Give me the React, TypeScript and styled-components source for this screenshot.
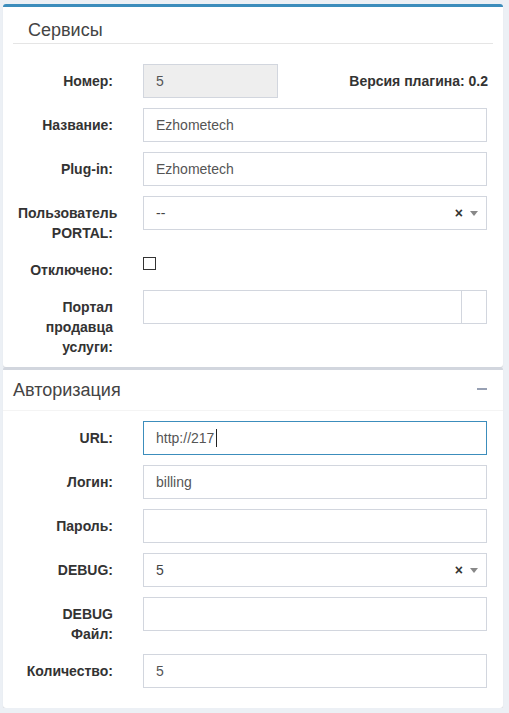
import React from "react";
import styled, { createGlobalStyle } from "styled-components";

const Global = createGlobalStyle`
  html, body { margin: 0; padding: 0; background: #ecf0f5; }
  body {
    font-family: "Liberation Sans", Arial, Helvetica, sans-serif;
    font-size: 14px;
    color: #333;
  }
  * { box-sizing: border-box; }
`;

const Page = styled.div`
  width: 509px;
  padding: 4px 6px 0 3px;
`;

const Box = styled.section<{ $accent: string }>`
  display: flow-root;
  background: #fff;
  border-top: 3px solid ${(p) => p.$accent};
  border-radius: 3px;
  box-shadow: 0 1px 1px rgba(0, 0, 0, 0.1);
  width: 500px;
`;

const Body = styled.div<{ $bottom: number }>`
  display: flow-root;
  padding: 10px 10px ${(p) => p.$bottom}px 10px;
`;

const Legend = styled.div`
  padding-left: 15px;
  font-size: 18px;
  line-height: 26px;
  color: #444;
  border-bottom: 1px solid #e5e5e5;
  margin-bottom: 20px;
`;

const BoxHeader = styled.div`
  display: flex;
  align-items: center;
  justify-content: space-between;
  padding: 10px;
  border-bottom: 1px solid #f4f4f4;
`;

const BoxTitle = styled.h3`
  margin: 0;
  font-size: 18px;
  line-height: 20px;
  font-weight: normal;
  color: #444;
`;

const Tool = styled.button`
  border: none;
  background: transparent;
  padding: 0 6px 0 0;
  margin: 0 0 3px;
  display: flex;
  cursor: pointer;
`;

const Row = styled.div`
  display: grid;
  grid-template-columns: 95px 1fr;
  column-gap: 30px;
  padding: 0 6px 0 5px;
  margin-bottom: 10px;
`;

const Label = styled.label`
  display: block;
  text-align: right;
  font-weight: bold;
  padding-top: 7px;
  line-height: 20px;
  color: #333;
  white-space: nowrap;
`;

const Input = styled.input<{ $focus?: boolean }>`
  display: block;
  width: 100%;
  height: 34px;
  padding: 6px 12px;
  border: 1px solid ${(p) => (p.$focus ? "#3c8dbc" : "#d2d6de")};
  border-radius: 0;
  font-family: inherit;
  font-size: 14px;
  line-height: 20px;
  color: #555;
  background: #fff;
  outline: none;
  &:disabled {
    background: #eee;
    color: #555;
    -webkit-text-fill-color: #555;
    opacity: 1;
  }
`;

const ShortInput = styled(Input)`
  width: 135px;
`;

const SplitCell = styled.div`
  display: flex;
  justify-content: space-between;
  align-items: flex-start;
`;

const Version = styled.div`
  font-weight: bold;
  padding-top: 7px;
  line-height: 20px;
  color: #333;
  margin-right: -1px;
`;

const FieldWrap = styled.div`
  position: relative;
`;

const Caret = styled.span`
  position: absolute;
  left: 73px;
  top: 8px;
  width: 1px;
  height: 18px;
  background: #222;
`;

const Select = styled.div`
  display: flex;
  align-items: center;
  height: 34px;
  padding: 6px 8px 6px 12px;
  border: 1px solid #d2d6de;
  background: #fff;
  color: #444;
  line-height: 20px;
`;

const SelectValue = styled.span`
  flex: 1;
`;

const Clear = styled.span`
  font-weight: bold;
  font-size: 14px;
  color: #333;
  margin-right: 7px;
  line-height: 20px;
`;

const Arrow = styled.span`
  width: 0;
  height: 0;
  border-top: 5px solid #888;
  border-left: 4px solid transparent;
  border-right: 4px solid transparent;
`;

const Check = styled.input`
  appearance: none;
  -webkit-appearance: none;
  display: block;
  width: 13px;
  height: 13px;
  margin: 4px 0 0;
  border: 1px solid #333;
  border-radius: 0;
  background: #fff;
`;

const Group = styled.div`
  display: flex;
  height: 34px;
`;

const GroupInput = styled(Input)`
  flex: 1;
`;

const Addon = styled.span`
  width: 25px;
  border: 1px solid #d2d6de;
  border-left: none;
  background: #fff;
`;

export default function App() {
  return (
    <>
      <Global />
      <Page>
        <Box $accent="#3c8dbc">
          <Body $bottom={0}>
            <Legend>Сервисы</Legend>
            <Row>
              <Label>Номер:</Label>
              <SplitCell>
                <ShortInput disabled value="5" readOnly />
                <Version>Версия плагина: 0.2</Version>
              </SplitCell>
            </Row>
            <Row>
              <Label>Название:</Label>
              <Input value="Ezhometech" readOnly />
            </Row>
            <Row>
              <Label>Plug-in:</Label>
              <Input value="Ezhometech" readOnly />
            </Row>
            <Row>
              <Label>
                Пользователь
                <br />
                PORTAL:
              </Label>
              <Select>
                <SelectValue>--</SelectValue>
                <Clear>×</Clear>
                <Arrow />
              </Select>
            </Row>
            <Row>
              <Label>Отключено:</Label>
              <div>
                <Check type="checkbox" />
              </div>
            </Row>
            <Row>
              <Label>
                Портал
                <br />
                продавца
                <br />
                услуги:
              </Label>
              <Group>
                <GroupInput value="" readOnly />
                <Addon />
              </Group>
            </Row>
          </Body>
        </Box>
        <Box $accent="#d2d6de">
          <BoxHeader>
            <BoxTitle>Авторизация</BoxTitle>
            <Tool aria-label="collapse">
              <svg width="10" height="2" viewBox="0 0 10 2">
                <rect width="10" height="2" fill="#97a0b3" />
              </svg>
            </Tool>
          </BoxHeader>
          <Body $bottom={10}>
            <Row>
              <Label>URL:</Label>
              <FieldWrap>
                <Input $focus value="http://217" readOnly />
                <Caret />
              </FieldWrap>
            </Row>
            <Row>
              <Label>Логин:</Label>
              <Input value="billing" readOnly />
            </Row>
            <Row>
              <Label>Пароль:</Label>
              <Input type="password" value="" readOnly />
            </Row>
            <Row>
              <Label>DEBUG:</Label>
              <Select>
                <SelectValue>5</SelectValue>
                <Clear>×</Clear>
                <Arrow />
              </Select>
            </Row>
            <Row>
              <Label>
                DEBUG
                <br />
                Файл:
              </Label>
              <Input value="" readOnly />
            </Row>
            <Row>
              <Label>Количество:</Label>
              <Input value="5" readOnly />
            </Row>
          </Body>
        </Box>
      </Page>
    </>
  );
}
